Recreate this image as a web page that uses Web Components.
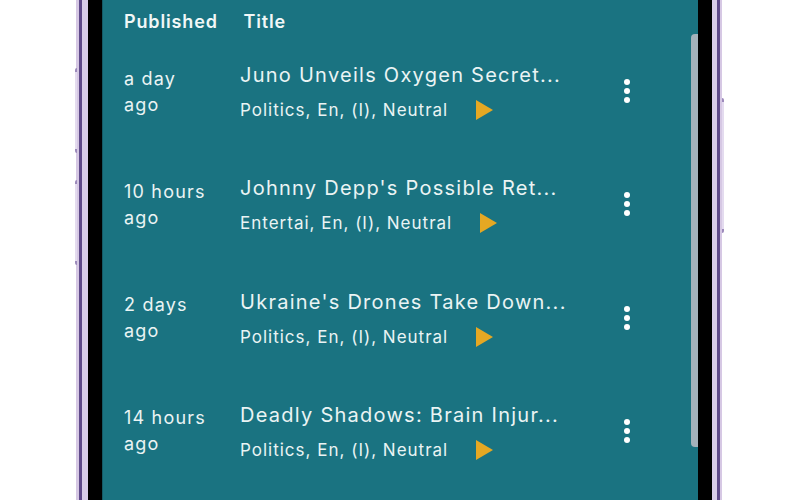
<!DOCTYPE html>
<html>
<head>
<meta charset="utf-8">
<title>News</title>
<style>
  html, body { margin: 0; height: 100%; background: #fff; overflow: hidden; }
  body { font-family: Inter, "Liberation Sans", sans-serif; }
</style>
</head>
<body>
<phone-frame>
  <news-table>
    <news-row age="a day" title="Juno Unveils Oxygen Secret..." meta="Politics, En, (I), Neutral"></news-row>
    <news-row age="10 hours" title="Johnny Depp's Possible Ret..." meta="Entertai, En, (I), Neutral"></news-row>
    <news-row age="2 days" title="Ukraine's Drones Take Down..." meta="Politics, En, (I), Neutral"></news-row>
    <news-row age="14 hours" title="Deadly Shadows: Brain Injur..." meta="Politics, En, (I), Neutral"></news-row>
  </news-table>
</phone-frame>
<script>
class PhoneFrame extends HTMLElement {
  constructor() {
    super();
    this.attachShadow({ mode: "open" });
    this.shadowRoot.innerHTML = `
<style>
  :host { display: flex; height: 500px; padding-left: 76px; box-sizing: border-box; }
  .rail { width: 12px; flex: none; background: linear-gradient(90deg, #d6c8e4 0 3px, #5f4a8a 3px 6px, #d9cdea 6px 12px); position: relative; }
  .rail.right { width: 10px; background: linear-gradient(90deg, #d9cdea 0 5px, #5f4a8a 5px 8px, #d6c8e4 8px 10px); }
  .bezel { width: 14px; flex: none; background: #000; }
  .screen { width: 596px; flex: none; background: #1a7381; position: relative; overflow: hidden; box-shadow: inset 1px 0 0 #155a66; }
  .thumb { position: absolute; top: 34px; right: 0; width: 7px; height: 413px; background: #a3b2bb; border-radius: 4px 0 0 4px; }
  .key { position: absolute; width: 2px; background: #e4dbef; box-sizing: border-box; border-style: solid; border-color: #9c8abb; border-width: 4px 0; }
  .rail .key { left: -1px; border-radius: 2px 0 0 2px; }
  .rail.right .key { left: 10px; border-radius: 0 2px 2px 0; }
</style>
<div class="rail">
  <div class="key" style="top:68px;height:85px"></div>
  <div class="key" style="top:180px;height:85px"></div>
</div>
<div class="bezel"></div>
<div class="screen"><slot></slot><div class="thumb"></div></div>
<div class="bezel"></div>
<div class="rail right"><div class="key" style="top:98px;height:135px"></div></div>`;
  }
}

class NewsTable extends HTMLElement {
  constructor() {
    super();
    this.attachShadow({ mode: "open" });
    this.shadowRoot.innerHTML = `
<style>
  :host { display: block; color: #eaf4f4; }
  .head { display: flex; height: 42px; padding-left: 22px; align-items: center; font-size: 18px; font-weight: 600; letter-spacing: .85px; color: #f1f7f7; }
  .head span:first-child { width: 119.5px; }
  .list { display: flex; flex-direction: column; }
</style>
<div class="head"><span>Published</span><span>Title</span></div>
<div class="list"><slot></slot></div>`;
  }
}

class NewsRow extends HTMLElement {
  constructor() {
    super();
    this.attachShadow({ mode: "open" });
    this.shadowRoot.innerHTML = `
<style>
  :host { display: flex; height: 113.3px; padding-left: 22px; box-sizing: border-box; }
  .age { width: 116px; flex: none; padding-top: 23.5px; font-size: 18px; line-height: 26px; letter-spacing: 1.2px; }
  .body { width: 383px; flex: none; padding-top: 18px; }
  .title { font-size: 20px; line-height: 30px; letter-spacing: 1.26px; white-space: nowrap; }
  .meta { display: flex; align-items: center; gap: 28px; margin-top: 8px; height: 24px; font-size: 17px; letter-spacing: 1px; white-space: nowrap; }
  .play { flex: none; display: block; }
  .more { flex: none; margin-top: 36px; display: block; }
</style>
<div class="age"><span id="age"></span><br>ago</div>
<div class="body">
  <div class="title" id="title"></div>
  <div class="meta"><span id="meta"></span><svg class="play" width="18" height="20" viewBox="0 0 18 20"><path d="M0 0L17 10L0 20Z" fill="#e5a823"/></svg></div>
</div>
<svg class="more" width="8" height="26" viewBox="0 0 8 26" fill="#fff"><circle cx="4" cy="4" r="3"/><circle cx="4" cy="13" r="3"/><circle cx="4" cy="22" r="3"/></svg>`;
  }
  connectedCallback() {
    this.shadowRoot.getElementById("age").textContent = this.getAttribute("age");
    this.shadowRoot.getElementById("title").textContent = this.getAttribute("title");
    this.shadowRoot.getElementById("meta").textContent = this.getAttribute("meta");
    this.removeAttribute("title");
  }
}

customElements.define("phone-frame", PhoneFrame);
customElements.define("news-table", NewsTable);
customElements.define("news-row", NewsRow);
</script>
</body>
</html>
